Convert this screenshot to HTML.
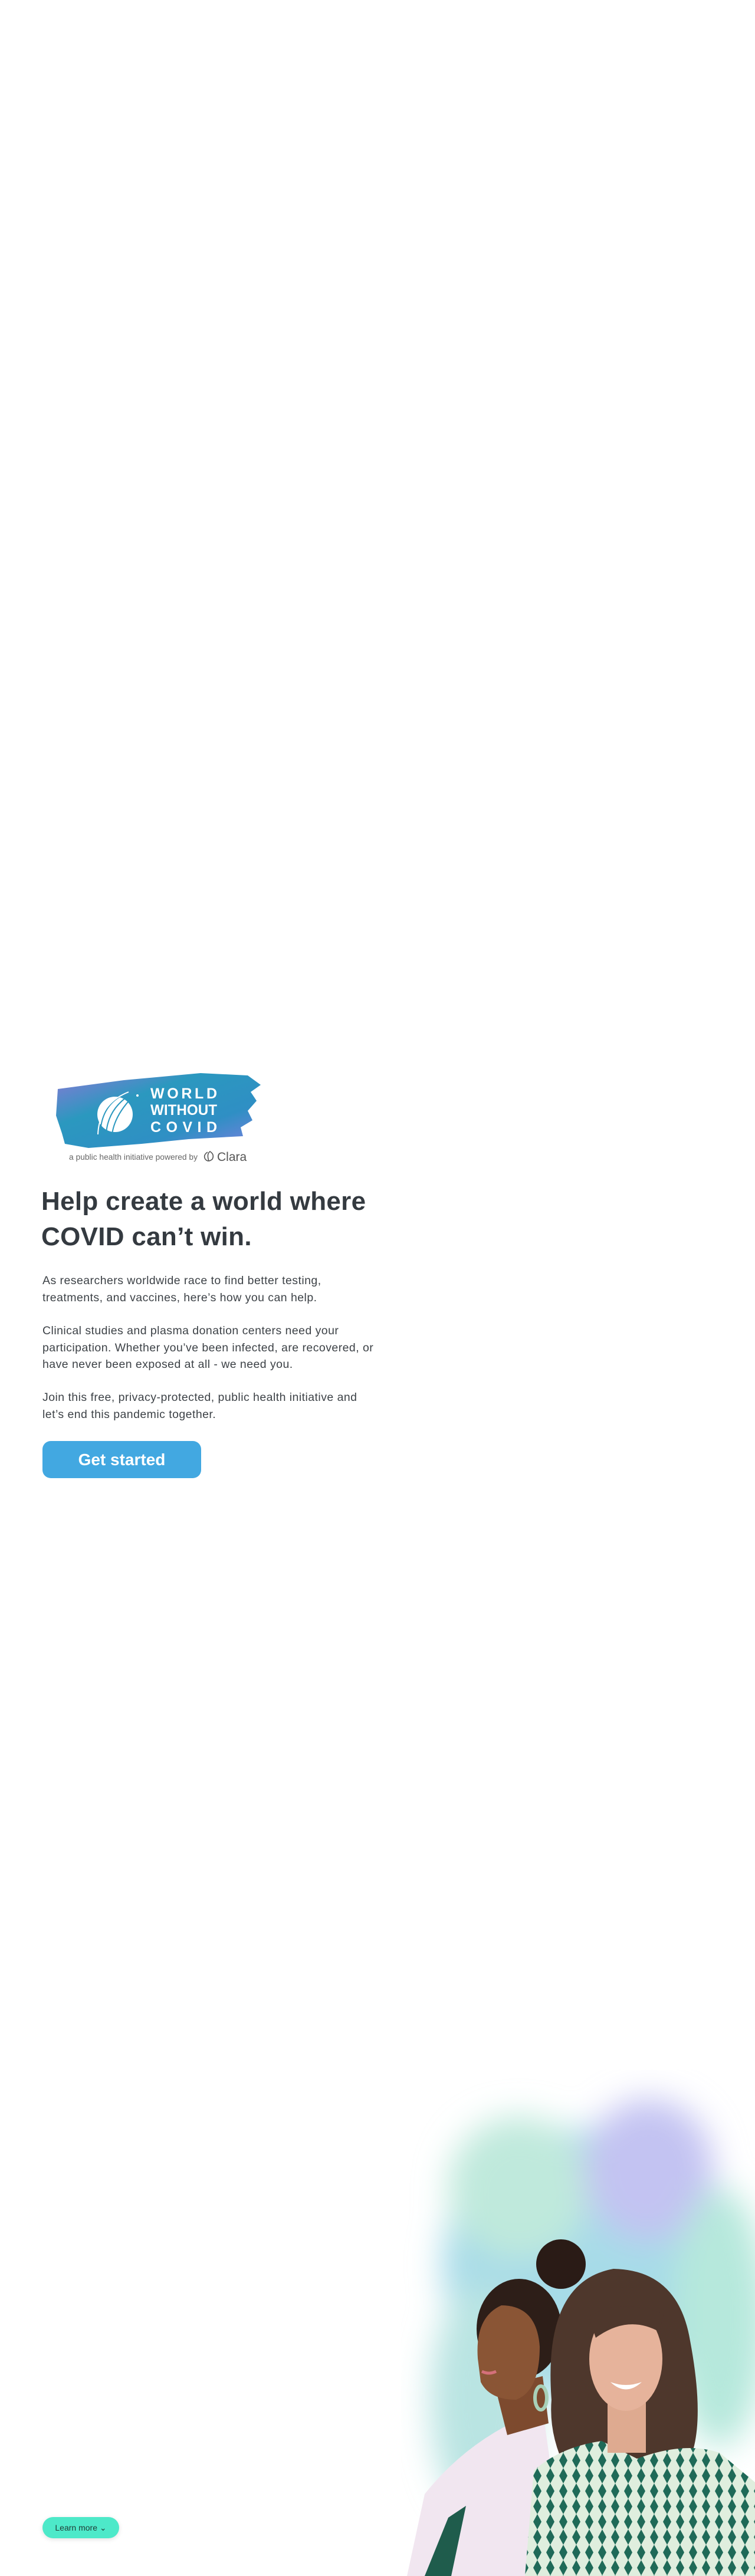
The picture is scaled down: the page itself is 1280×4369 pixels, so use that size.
<!DOCTYPE html>
<html><head><meta charset="utf-8">
<style>
html,body{margin:0;padding:0;background:#fff;}
body{width:1280px;height:4369px;position:relative;overflow:hidden;font-family:"Liberation Sans",sans-serif;}
.abs{position:absolute;}
h1{position:absolute;left:70px;top:2008px;margin:0;font-size:44px;line-height:60px;font-weight:bold;color:#343a40;letter-spacing:0.3px;}
.p{position:absolute;left:72px;margin:0;font-size:19.5px;line-height:28.5px;color:#3d4247;width:640px;letter-spacing:0.45px;}
.btn{position:absolute;left:72px;top:2444px;width:269px;height:63px;border-radius:14px;background:#42a8e1;color:#fff;font-size:28px;font-weight:bold;text-align:center;line-height:63px;}
.lm{position:absolute;left:72px;top:4269px;width:130px;height:36px;border-radius:18px;background:#4de9c9;color:#1f3a35;font-size:14px;line-height:36px;text-align:center;box-shadow:0 2px 8px rgba(0,0,0,0.12);}
</style></head><body>

<svg class="abs" style="left:90px;top:1812px" width="370" height="170" viewBox="0 0 370 170">
<defs>
<linearGradient id="g" x1="0" y1="0" x2="1" y2="1">
<stop offset="0" stop-color="#8a78d6"/><stop offset="0.35" stop-color="#2b98bf"/><stop offset="0.7" stop-color="#2f8fc4"/><stop offset="1" stop-color="#7d7fe0"/>
</linearGradient>
</defs>
<path d="M8 35 L120 20 L250 8 L330 12 L352 28 L335 40 L345 55 L330 72 L338 88 L318 100 L322 115 L230 120 L150 128 L60 135 L20 128 L15 110 L5 80 Z" fill="url(#g)"/>
<circle cx="105" cy="78" r="30" fill="#fff"/>
<path d="M80 110 Q82 60 125 42 M90 112 Q92 70 130 45 M100 112 Q104 80 135 48" stroke="#2b98bf" stroke-width="2" fill="none"/>
<path d="M76 112 Q78 60 128 40" stroke="#fff" stroke-width="2" fill="none"/>
<circle cx="143" cy="46" r="2" fill="#fff"/>
<text x="165" y="51" fill="#fff" font-family="Liberation Sans Narrow, Liberation Sans, sans-serif" font-weight="bold" font-size="25" textLength="113" lengthAdjust="spacing">WORLD</text>
<text x="165" y="79" fill="#fff" font-family="Liberation Sans Narrow, Liberation Sans, sans-serif" font-weight="bold" font-size="25" textLength="113" lengthAdjust="spacingAndGlyphs">WITHOUT</text>
<text x="165" y="108" fill="#fff" font-family="Liberation Sans Narrow, Liberation Sans, sans-serif" font-weight="bold" font-size="25" textLength="113" lengthAdjust="spacing">COVID</text>
<text x="27" y="155" fill="#666" font-size="14" font-family="Liberation Sans, sans-serif" textLength="218" lengthAdjust="spacingAndGlyphs">a public health initiative powered by</text>
<path d="M262 142 q-8 5 -4 12 q5 6 12 0 q4 -8 -4 -13 q-6 4 -2 16" stroke="#555" stroke-width="1.6" fill="none"/>
<text x="278" y="157" fill="#555" font-size="21" font-family="Liberation Sans, sans-serif">Clara</text>
</svg>

<h1>Help create a world where<br>COVID can’t win.</h1>
<p class="p" style="top:2158px">As researchers worldwide race to find better testing,<br>treatments, and vaccines, here’s how you can help.</p>
<p class="p" style="top:2243px">Clinical studies and plasma donation centers need your<br>participation. Whether you’ve been infected, are recovered, or<br>have never been exposed at all - we need you.</p>
<p class="p" style="top:2356px">Join this free, privacy-protected, public health initiative and<br>let’s end this pandemic together.</p>
<div class="btn">Get started</div>

<svg class="abs" style="left:680px;top:3510px" width="600" height="859" viewBox="0 0 600 859">
<defs>
<filter id="b"><feGaussianBlur stdDeviation="28"/></filter>
<pattern id="pt" width="22" height="26" patternUnits="userSpaceOnUse">
<rect width="22" height="26" fill="#dfeede"/>
<path d="M11 0 L18 13 L11 26 L4 13Z" fill="#1f6a58"/>
</pattern>
</defs>
<g filter="url(#b)">
<ellipse cx="300" cy="330" rx="230" ry="230" fill="#a7dbe8"/>
<ellipse cx="200" cy="200" rx="120" ry="120" fill="#bfe9dc"/>
<ellipse cx="420" cy="170" rx="110" ry="120" fill="#c3c3f2"/>
<ellipse cx="540" cy="420" rx="80" ry="220" fill="#b6e8dc"/>
<ellipse cx="140" cy="560" rx="90" ry="200" fill="#b9e4e2"/>
</g>
<!-- woman 1 coat -->
<path d="M10 859 L40 720 Q120 620 240 577 L280 859Z" fill="#f1e6f0"/>
<path d="M40 859 L80 760 L110 740 L85 859Z" fill="#1f5c4c"/>
<!-- woman 1 neck -->
<path d="M160 540 L240 520 L250 600 L180 620Z" fill="#7d4a2e"/>
<!-- woman 1 head -->
<ellipse cx="271" cy="330" rx="42" ry="42" fill="#2a1b16"/>
<ellipse cx="200" cy="440" rx="72" ry="85" fill="#2d1e18"/>
<path d="M130 490 Q125 420 170 400 Q230 400 235 470 Q235 545 195 560 Q150 560 135 530Z" fill="#8a5535"/>
<path d="M137 512 q12 6 24 0" stroke="#d4707a" stroke-width="5" fill="none"/>
<ellipse cx="237" cy="557" rx="10" ry="20" fill="none" stroke="#a8d0b8" stroke-width="6"/>
<!-- woman 2 hair -->
<path d="M255 560 Q240 360 360 338 Q470 340 490 460 Q520 620 480 679 L280 679 Q250 620 255 560Z" fill="#4e372c"/>
<!-- shirt -->
<path d="M210 859 L225 680 Q270 640 340 630 L400 660 Q480 630 540 650 L600 700 L600 859Z" fill="url(#pt)"/>
<!-- neck -->
<rect x="350" y="560" width="65" height="90" fill="#deaa90"/>
<!-- face -->
<ellipse cx="381" cy="491" rx="62" ry="88" fill="#e6b39b"/>
<path d="M355 530 Q381 555 408 530 Q381 540 355 530Z" fill="#fff"/>
<path d="M318 420 Q370 385 445 415 L438 445 Q385 415 330 455Z" fill="#4e372c"/>
</svg>

<div class="lm">Learn more &#8964;</div>
</body></html>
